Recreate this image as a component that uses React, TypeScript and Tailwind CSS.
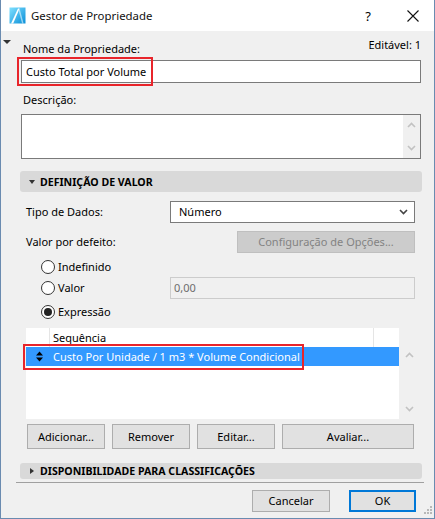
import React from 'react';

const ChevronUp = ({ className }: { className?: string }) => (
  <svg className={className} width="9" height="6" viewBox="0 0 9 6" fill="none" stroke="currentColor" strokeWidth={1.6}>
    <path d="M1 5l3.5-3.5L8 5" />
  </svg>
);

const ChevronDown = ({ className }: { className?: string }) => (
  <svg className={className} width="9" height="6" viewBox="0 0 9 6" fill="none" stroke="currentColor" strokeWidth={1.6}>
    <path d="M1 1l3.5 3.5L8 1" />
  </svg>
);

const AppIcon = () => (
  <svg width="17" height="17" viewBox="0 0 17 17">
    <defs>
      <linearGradient id="ac" x1="0" y1="0" x2="1" y2="1">
        <stop offset="0" stopColor="#7fe0ff" />
        <stop offset="1" stopColor="#0a8fd8" />
      </linearGradient>
    </defs>
    <rect x="0.5" y="0.5" width="16" height="16" fill="url(#ac)" />
    <path d="M2 16.5L9 1.5h1.6L4.2 16.5z" fill="#fff" />
    <path d="M10.6 1.5l4 15h-1.5L9.8 4z" fill="#e8f8ff" opacity="0.6" />
  </svg>
);

function Radio({ checked, label }: { checked?: boolean; label: string }) {
  return (
    <div className="flex items-center">
      <span className="w-[14px] h-[14px] rounded-full border border-[#333] bg-white flex items-center justify-center">
        {checked && <span className="w-[8px] h-[8px] rounded-full bg-[#222]" />}
      </span>
      <span className="ml-[3px]">{label}</span>
    </div>
  );
}

function Btn({ children, className }: { children: React.ReactNode; className?: string }) {
  return (
    <div className={`flex items-center justify-center bg-[#e1e1e1] border border-[#adadad] ${className ?? ''}`}>
      {children}
    </div>
  );
}

export default function App() {
  return (
    <div
      className="w-[435px] h-[519px] bg-[#f0f0f0] border-x border-b border-[#6a8bb0] flex flex-col text-[11px] leading-[16px] text-black overflow-hidden"
      style={{ fontFamily: '"Noto Sans", "Open Sans", sans-serif' }}
    >
      {/* Title bar */}
      <div className="h-[31px] bg-white flex items-center shrink-0">
        <div className="ml-[8px] mt-[-1px]">
          <AppIcon />
        </div>
        <span className="ml-[5px] text-[11.4px] text-[#111]">Gestor de Propriedade</span>
        <span className="ml-auto text-[13px] mr-[36px]">?</span>
        <svg className="mr-[15px]" width="12" height="12" viewBox="0 0 12 12" stroke="#111" strokeWidth={1.1}>
          <path d="M0.5 0.5l11 11M11.5 0.5l-11 11" />
        </svg>
      </div>

      {/* Body */}
      <div className="relative flex-1 flex flex-col pl-[19px] pr-[12px]">
        <div className="absolute left-[2px] top-[9px] w-0 h-0 border-l-[4px] border-r-[4px] border-t-[4px] border-l-transparent border-r-transparent border-t-[#333]" />

        <div className="flex justify-between mt-[6px] h-[20px]">
          <span className="pt-[4px] ml-[3px]">Nome da Propriedade:</span>
          <span className="mr-[1px]">Editável: 1</span>
        </div>

        <div className="relative mt-[3px] mx-[1px]">
          <div className="h-[23px] bg-white border border-[#7a7a7a] flex items-center pl-[4px]">Custo Total por Volume</div>
          <div className="absolute left-[-4px] top-[-3px] w-[136px] h-[29px] border-2 border-[#e8252b]" />
        </div>

        <div className="mt-[9px] ml-[3px]">Descrição:</div>
        <div className="mt-[6px] mx-[1px] h-[45px] bg-white border border-[#7a7a7a] flex justify-end">
          <div className="w-[17px] bg-[#f0f0f0] flex flex-col items-center justify-between py-[7px] text-[#c2c2c2]">
            <ChevronUp />
            <ChevronDown />
          </div>
        </div>

        {/* Section header */}
        <div className="mt-[12px] h-[21px] bg-[#d9d9d9] rounded-[3px] flex items-center font-bold text-[10.6px]">
          <span className="ml-[9px] w-0 h-0 border-l-[3.5px] border-r-[3.5px] border-t-[4px] border-l-transparent border-r-transparent border-t-[#333]" />
          <span className="ml-[5px]">DEFINIÇÃO DE VALOR</span>
        </div>

        <div className="flex items-center mt-[9px] pl-[6px] pr-[7px]">
          <span className="flex-1">Tipo de Dados:</span>
          <div className="w-[245px] h-[22px] bg-white border border-[#7a7a7a] flex items-center pl-[8px] pr-[6px]">
            <span className="flex-1">Número</span>
            <ChevronDown className="text-[#444]" />
          </div>
        </div>

        <div className="flex items-center mt-[8px] pl-[6px] pr-[7px]">
          <span className="flex-1">Valor por defeito:</span>
          <div className="w-[178px] h-[22px] bg-[#cccccc] border border-[#bfbfbf] flex items-center justify-center text-[#838383]">
            Configuração de Opções...
          </div>
        </div>

        <div className="flex flex-col pl-[21px] pr-[7px]">
          <div className="h-[20px] mt-[4px] flex items-center">
            <Radio label="Indefinido" />
          </div>
          <div className="h-[22px] flex items-center">
            <div className="flex-1">
              <Radio label="Valor" />
            </div>
            <div className="w-[245px] h-[22px] bg-[#f0f0f0] border border-[#cccccc] flex items-center pl-[3px] text-[#6d6d6d]">0,00</div>
          </div>
          <div className="h-[22px] mt-[2px] flex items-center">
            <Radio checked label="Expressão" />
          </div>
        </div>

        {/* Expression list */}
        <div className="relative mt-[5px] ml-[6px] mr-[2px] h-[91px] flex">
          <div className="flex-1 bg-white flex flex-col">
            <div className="h-[19px] flex">
              <div className="w-[24px] border-r border-[#e5e5e5]" />
              <div className="flex-1 pl-[3px] flex items-center border-r border-[#e5e5e5]">Sequência</div>
              <div className="w-[25px]" />
            </div>
            <div className="h-[19px] bg-[#3399ff] text-white flex items-center">
              <svg className="ml-[10px]" width="7" height="11" viewBox="0 0 7 11" fill="#000">
                <path d="M3.5 0.5L7 4.5H0z" />
                <path d="M3.5 10.5L7 6.5H0z" />
              </svg>
              <span className="ml-[10px]">Custo Por Unidade / 1 m3 * Volume Condicional</span>
            </div>
          </div>
          <div className="w-[21px] flex flex-col items-center justify-between pt-[24px] pb-[7px] text-[#c2c2c2]">
            <ChevronUp />
            <ChevronDown />
          </div>
          <div className="absolute left-[-3px] top-[16px] w-[281px] h-[26px] border-2 border-[#e8252b]" />
        </div>

        <div className="flex mt-[5px] ml-[7px] mr-[8px] h-[25px] gap-[7px]">
          <Btn className="w-[78px]">Adicionar...</Btn>
          <Btn className="w-[78px]">Remover</Btn>
          <Btn className="w-[78px]">Editar...</Btn>
          <Btn className="flex-1">Avaliar...</Btn>
        </div>

        <div className="mt-[14px] h-[16px] bg-[#d9d9d9] rounded-[3px] flex items-center font-bold text-[10.6px]">
          <span className="ml-[10px] w-0 h-0 border-t-[3.5px] border-b-[3.5px] border-l-[4px] border-t-transparent border-b-transparent border-l-[#333]" />
          <span className="ml-[6px]">DISPONIBILIDADE PARA CLASSIFICAÇÕES</span>
        </div>

        <div className="mt-[3px] -ml-[4px] -mr-[2px] h-px bg-[#a0a0a0]" />

        <div className="flex justify-end mt-[7px] mr-[6px] gap-[19px]">
          <Btn className="w-[78px] h-[22px]">Cancelar</Btn>
          <div className="w-[67px] h-[22px] flex items-center justify-center bg-[#e1e1e1] border-2 border-[#0078d7]">OK</div>
        </div>

        <svg className="absolute right-[2px] bottom-[4px]" width="8" height="8" viewBox="0 0 8 8" fill="#b8b8b8">
          <rect x="6" y="0" width="2" height="2" />
          <rect x="3" y="3" width="2" height="2" />
          <rect x="6" y="3" width="2" height="2" />
          <rect x="0" y="6" width="2" height="2" />
          <rect x="3" y="6" width="2" height="2" />
          <rect x="6" y="6" width="2" height="2" />
        </svg>
      </div>
    </div>
  );
}
